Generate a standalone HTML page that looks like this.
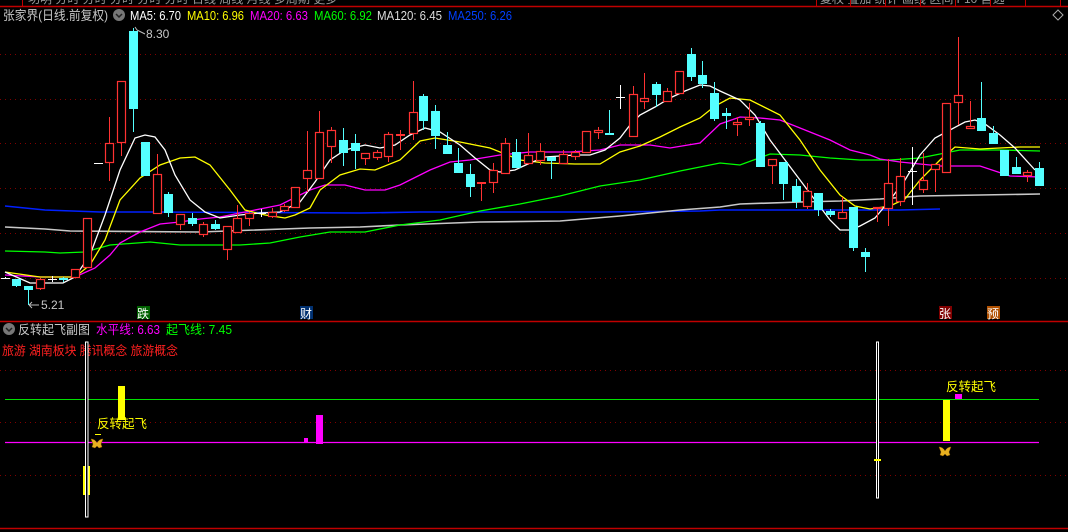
<!DOCTYPE html>
<html><head><meta charset="utf-8"><style>
html,body{margin:0;padding:0;background:#000;width:1068px;height:532px;overflow:hidden}
svg{display:block}
text{font-family:"Liberation Sans","Noto Sans CJK SC",sans-serif}
</style></head><body>
<svg id="s" width="1068" height="532" xmlns="http://www.w3.org/2000/svg">
<rect width="1068" height="532" fill="#000"/>
<g clip-path="url(#tc)"><clipPath id="tc"><rect x="0" y="0" width="1068" height="6"/></clipPath>
<text x="28" y="3" fill="#999" font-size="12">功明  分时  分时  分时  分时  分时  日线  周线  月线  多周期  更多</text>
<text x="820" y="3" fill="#999" font-size="12">复权  叠加  统计  画线  区间   F10  自选</text></g>
<line x1="0" y1="6.5" x2="1068" y2="6.5" stroke="#c00000" stroke-width="1.5"/>
<g stroke="#c00000" stroke-width="1"><line x1="22.5" y1="0" x2="22.5" y2="6"/><line x1="816.5" y1="0" x2="816.5" y2="6"/><line x1="850.5" y1="0" x2="850.5" y2="6"/><line x1="885.5" y1="0" x2="885.5" y2="6"/><line x1="920.5" y1="0" x2="920.5" y2="6"/><line x1="955.5" y1="0" x2="955.5" y2="6"/><line x1="990.5" y1="0" x2="990.5" y2="6"/><line x1="1025.5" y1="0" x2="1025.5" y2="6"/><line x1="1060.5" y1="0" x2="1060.5" y2="6"/></g>
<text x="3" y="20" fill="#c8c8c8" font-size="13" textLength="105" lengthAdjust="spacingAndGlyphs">张家界(日线.前复权)</text>
<circle cx="119" cy="15" r="6" fill="#777"/><path d="M116 14l3 3 3-3" stroke="#222" stroke-width="1.5" fill="none"/>
<g font-size="12.5">
<text x="130" y="20" fill="#fff" textLength="51" lengthAdjust="spacingAndGlyphs">MA5: 6.70</text>
<text x="187" y="20" fill="#ff0" textLength="57" lengthAdjust="spacingAndGlyphs">MA10: 6.96</text>
<text x="250" y="20" fill="#f0f" textLength="58" lengthAdjust="spacingAndGlyphs">MA20: 6.63</text>
<text x="314" y="20" fill="#0f0" textLength="58" lengthAdjust="spacingAndGlyphs">MA60: 6.92</text>
<text x="377" y="20" fill="#ddd" textLength="65" lengthAdjust="spacingAndGlyphs">MA120: 6.45</text>
<text x="448" y="20" fill="#0040ff" textLength="64" lengthAdjust="spacingAndGlyphs">MA250: 6.26</text>
</g>
<path d="M1053 15l5-5 5 5-5 5z" stroke="#aaa" fill="none"/>
<g stroke="#800000" stroke-dasharray="1 4" stroke-width="1">
<line x1="0" y1="54.5" x2="1068" y2="54.5"/><line x1="0" y1="99.5" x2="1068" y2="99.5"/><line x1="0" y1="143.5" x2="1068" y2="143.5"/><line x1="0" y1="188.5" x2="1068" y2="188.5"/><line x1="0" y1="233.5" x2="1068" y2="233.5"/><line x1="0" y1="278.5" x2="1068" y2="278.5"/>
<line x1="0" y1="370.5" x2="1068" y2="370.5"/><line x1="0" y1="422.5" x2="1068" y2="422.5"/><line x1="0" y1="475.5" x2="1068" y2="475.5"/>
</g>
<g id="ma" fill="none" stroke-width="1.3">
<polyline stroke="#0020ff" stroke-width="1.6" points="5,206 45,210 100,212 150,212 360,213 420,212 500,212 600,212 700,211 720,210 770,210 840,210 900,210 940,209"/>
<polyline stroke="#c8c8c8" stroke-width="1.6" points="5,227 45,229 70,231 200,232 310,228 360,227 400,225 480,222 560,221 620,216 680,210 720,207 740,204 800,202 840,201 880,199 920,196 980,195 1040,194"/>
<polyline stroke="#00ff00" points="5,251 45,252 60,253 85,252 110,245 150,242 180,245 240,245 270,243 300,237 330,232 365,232 400,225 440,220 480,211 520,204 560,196 600,186 640,180 680,171 720,163 740,165 770,154 800,155 830,158 860,160 890,160 920,158 940,154 960,150 1000,150 1040,151"/>
<polyline stroke="#ff00ff" points="5,275 40,277 75,277 95,268 110,255 120,243 140,232 160,224 180,222 200,219 220,217 250,211 280,205 310,190 325,185 345,185 365,190 385,190 400,185 430,170 450,162 470,160 500,155 530,152 570,152 600,150 620,145 650,145 670,148 700,143 720,124 740,117 760,118 780,120 800,128 830,140 850,150 870,155 880,159 900,162 920,164 940,166 980,166 1010,176 1040,177"/>
<polyline stroke="#ffff00" points="5,272 40,277 75,277 90,265 105,240 120,200 140,178 160,165 180,158 195,157 210,165 230,190 245,210 265,215 285,218 295,215 310,208 320,190 340,175 360,169 375,170 400,160 420,141 435,138 460,142 490,148 520,160 545,163 575,164 600,164 620,152 640,146 660,137 680,127 700,118 715,106 730,98 750,100 780,115 800,140 820,170 840,195 855,206 870,209 890,206 905,199 920,180 940,160 955,147 980,149 1020,147 1040,147"/>
<polyline stroke="#ffffff" points="5,272 30,283 63,283 75,277 90,255 105,215 120,170 135,138 145,135 155,137 165,150 175,175 190,200 205,212 220,218 240,215 260,213 280,212 300,202 315,182 330,160 345,150 365,145 380,148 395,145 410,135 425,128 440,132 460,145 475,158 490,170 500,172 515,170 530,163 545,157 575,155 590,155 605,150 620,138 630,125 640,115 655,107 670,98 685,91 700,85 710,86 720,91 740,100 755,115 770,140 785,160 800,180 815,200 830,220 840,230 850,230 860,226 875,218 890,200 905,180 920,155 935,138 950,130 965,122 975,120 985,124 1000,135 1015,148 1035,170"/>
</g>
<g id="c"></g>
<path d="M135 27l2 3M137 30l8 4" stroke="#bbb" fill="none"/>
<text x="146" y="38" fill="#c8c8c8" font-size="12">8.30</text>
<path d="M29 305h10M29 305l3-3M29 305l3 3" stroke="#bbb" fill="none"/>
<text x="41" y="309" fill="#c8c8c8" font-size="12">5.21</text>
<rect x="137" y="306" width="13" height="13" fill="#006000"/><text x="137" y="318" fill="#fff" font-size="12">跌</text>
<rect x="300" y="306" width="13" height="13" fill="#003070"/><text x="300" y="318" fill="#fff" font-size="12">财</text>
<rect x="939" y="306" width="13" height="13" fill="#800000"/><text x="939" y="318" fill="#fff" font-size="12">张</text>
<rect x="987" y="306" width="13" height="13" fill="#b05000"/><text x="987" y="318" fill="#fff" font-size="12">预</text>
<line x1="0" y1="321.5" x2="1068" y2="321.5" stroke="#c00000" stroke-width="1.5"/>
<circle cx="9" cy="329" r="6" fill="#777"/><path d="M6 328l3 3 3-3" stroke="#222" stroke-width="1.5" fill="none"/>
<text x="18" y="334" fill="#c8c8c8" font-size="12.5" textLength="72" lengthAdjust="spacingAndGlyphs">反转起飞副图</text>
<text x="96" y="334" fill="#f0f" font-size="12.5" textLength="64" lengthAdjust="spacingAndGlyphs">水平线: 6.63</text>
<text x="166" y="334" fill="#0f0" font-size="12.5" textLength="66" lengthAdjust="spacingAndGlyphs">起飞线: 7.45</text>
<text x="2" y="355" fill="#ff2020" font-size="12.5" textLength="176" lengthAdjust="spacingAndGlyphs">旅游 湖南板块 腾讯概念 旅游概念</text>
<line x1="5" y1="399.5" x2="1039" y2="399.5" stroke="#00e000"/>
<line x1="5" y1="442.5" x2="1039" y2="442.5" stroke="#f0f" stroke-width="1.2"/>
<rect x="83" y="466" width="7" height="29" fill="#ff0"/>
<rect x="85.5" y="342" width="2.5" height="175" fill="#000" stroke="#fff" stroke-width="1"/>
<rect x="118" y="386" width="7" height="34" fill="#ff0"/>
<rect x="304" y="438" width="4" height="5" fill="#f0f"/>
<rect x="316" y="415" width="7" height="29" fill="#f0f"/>
<rect x="876.5" y="342" width="2" height="156" fill="#000" stroke="#fff" stroke-width="1"/>
<rect x="874" y="459" width="7" height="2" fill="#ff0"/>
<rect x="943" y="400" width="7" height="41" fill="#ff0"/>
<rect x="955" y="394" width="7" height="5" fill="#f0f"/>
<text x="97" y="428" fill="#ff0" font-size="12.5">反转起飞</text>
<text x="946" y="391" fill="#ff0" font-size="12.5">反转起飞</text>
<rect x="95" y="434" width="6" height="1" fill="#ff0"/>
<g fill="#e8b020" stroke="#8a5a00" stroke-width="0.5">
<path d="M91 439c3 0 5 2 6 4 1-2 3-4 6-4l-2 5 1 3-3 1-2-2-2 2-3-1 1-3z"/>
<path d="M939 447c3 0 5 2 6 4 1-2 3-4 6-4l-2 5 1 3-3 1-2-2-2 2-3-1 1-3z"/></g>
<line x1="0" y1="528.5" x2="1068" y2="528.5" stroke="#c00000" stroke-width="1.5"/>
</svg>
<script>
var d=[[5,278,278,277,279,'w'],[16,279,286,279,287,'c'],[28,286,290,286,305,'c'],[40,279,289,278,290,'r'],[52,279,279,276,282,'w'],[63,278,280,277,282,'c'],[75,269,278,269,278,'r'],[87,218,268,218,268,'r'],[98,163,163,163,163,'w'],[109,143,163,117,181,'r'],[121,81,143,81,156,'r'],[133,31,109,28,132,'c'],[145,142,176,142,176,'c'],[157,174,214,154,214,'r'],[168,194,213,192,217,'c'],[180,214,225,214,230,'r'],[192,218,224,213,226,'c'],[203,224,235,222,237,'r'],[215,224,229,220,230,'c'],[227,226,250,226,260,'r'],[237,218,233,205,233,'r'],[249,213,219,212,226,'r'],[261,213,213,209,217,'w'],[272,212,217,208,218,'r'],[284,206,211,204,212,'r'],[295,187,208,187,208,'r'],[307,170,179,131,192,'r'],[319,132,179,111,179,'r'],[331,130,147,127,163,'r'],[343,140,153,128,166,'c'],[355,143,151,134,169,'c'],
[365,153,159,153,165,'r'],[377,152,158,150,160,'r'],[388,134,157,132,162,'r'],[400,134,134,130,150,'r'],[413,112,134,81,140,'r'],[423,96,121,94,130,'c'],[435,111,136,105,149,'c'],[447,145,154,132,154,'c'],[458,163,173,148,173,'c'],[470,174,187,164,197,'c'],[481,182,182,182,201,'r'],[493,170,183,163,193,'r'],[505,143,174,138,174,'r'],[516,152,168,139,168,'c'],[528,155,164,133,165,'r'],[540,151,161,143,165,'r'],[551,157,161,157,179,'c'],[563,154,164,150,164,'r'],[575,152,157,150,160,'r'],[586,131,153,131,153,'r'],[598,130,133,127,139,'r'],[609,133,135,110,135,'c'],[620,97,97,85,109,'w'],[633,94,137,86,137,'r'],[644,98,102,73,109,'r'],[656,84,95,82,107,'c'],[667,91,102,88,102,'r'],[679,71,94,71,94,'r'],[691,54,77,48,81,'c'],[702,75,84,61,88,'c'],[714,93,119,82,121,'c'],
[726,113,116,108,129,'c'],[737,122,125,117,136,'r'],[749,117,120,103,126,'r'],[760,123,167,121,167,'c'],[772,159,166,159,184,'r'],[783,162,184,162,200,'c'],[796,186,202,179,208,'c'],[807,191,207,183,209,'r'],[818,193,210,193,216,'c'],[830,211,215,209,217,'c'],[842,212,219,197,219,'r'],[853,207,248,207,251,'c'],[865,252,257,248,272,'c'],[877,207,209,207,222,'r'],[888,183,209,159,226,'r'],[900,176,202,158,206,'r'],[912,171,171,147,205,'w'],[923,180,190,153,193,'r'],[935,164,170,164,192,'r'],[946,103,173,103,173,'r'],[958,95,103,37,125,'r'],[970,126,129,101,129,'r'],[981,118,131,82,131,'c'],[993,133,144,126,144,'c'],[1004,150,176,150,176,'c'],[1016,167,174,157,174,'c'],[1027,172,176,170,182,'r'],[1039,168,186,162,186,'c']];
var h='';d.forEach(function(k){var x=k[0],t=k[1],b=k[2],hi=k[3],lo=k[4],c=k[5];
if(c=='c'){h+='<line x1="'+(x+.5)+'" y1="'+hi+'" x2="'+(x+.5)+'" y2="'+lo+'" stroke="#54ffff"/><rect x="'+(x-4)+'" y="'+t+'" width="9" height="'+Math.max(b-t,2)+'" fill="#54ffff"/>';}
else if(c=='r'){h+='<line x1="'+(x+.5)+'" y1="'+hi+'" x2="'+(x+.5)+'" y2="'+t+'" stroke="#ff3232"/><line x1="'+(x+.5)+'" y1="'+b+'" x2="'+(x+.5)+'" y2="'+lo+'" stroke="#ff3232"/>'+(b-t<2?'<rect x="'+(x-4)+'" y="'+t+'" width="9" height="2" fill="#ff3232"/>':'<rect x="'+(x-3.5)+'" y="'+(t+.5)+'" width="8" height="'+(b-t-1)+'" fill="#000" stroke="#ff3232" stroke-width="1.2"/>');}
else{h+='<line x1="'+(x+.5)+'" y1="'+hi+'" x2="'+(x+.5)+'" y2="'+lo+'" stroke="#fff"/><line x1="'+(x-4)+'" y1="'+(t+.5)+'" x2="'+(x+5)+'" y2="'+(t+.5)+'" stroke="#fff"/>';}});
document.getElementById('c').innerHTML=h;
</script>
</body></html>
